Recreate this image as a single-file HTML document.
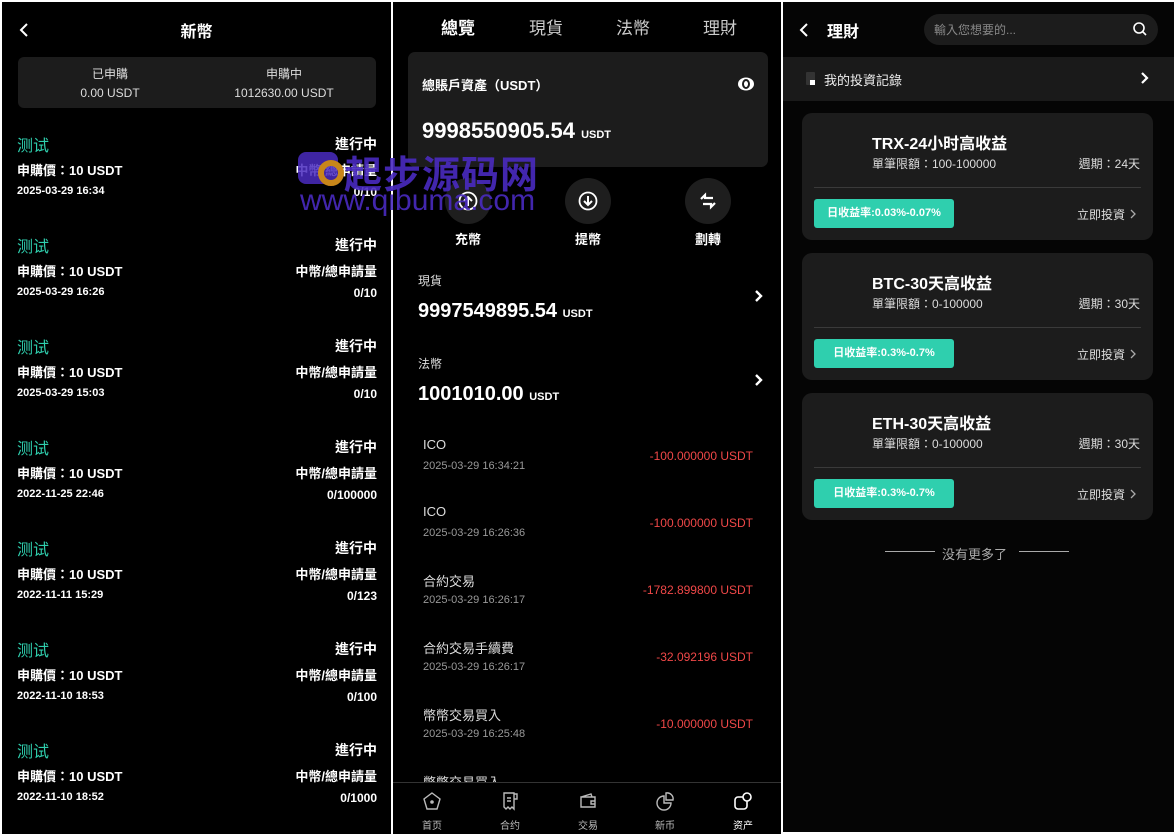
<!DOCTYPE html>
<html><head><meta charset="utf-8"><style>
*{margin:0;padding:0;box-sizing:border-box}
body{width:1176px;height:834px;background:#fff;position:relative;overflow:hidden;font-family:"Liberation Sans","Noto Sans CJK TC",sans-serif;color:#fff}
.p{position:absolute;background:#000;top:2px;overflow:hidden}
.a{position:absolute;white-space:nowrap}
.g{color:#2fcfae}
.b{font-weight:bold}
</style></head><body>
<!-- LEFT -->
<div class="p" style="left:2px;width:389px;height:832px">
  <svg class="a" style="left:16px;top:20px" width="14" height="16" viewBox="0 0 14 16"><path d="M9 2 L3 8 L9 14" stroke="#fff" stroke-width="2" fill="none"/></svg>
  <div class="a b" style="left:0;width:389px;text-align:center;top:16px;font-size:16px">新幣</div>
  <div class="a" style="left:16px;top:55px;width:358px;height:51px;background:#1c1c1c;border-radius:6px"></div>
  <div class="a" style="left:38px;width:140px;text-align:center;top:63px;font-size:12px;color:#ddd">已申購</div>
  <div class="a" style="left:38px;width:140px;text-align:center;top:84px;font-size:12px;color:#ddd">0.00 USDT</div>
  <div class="a" style="left:212px;width:140px;text-align:center;top:63px;font-size:12px;color:#ddd">申購中</div>
  <div class="a" style="left:212px;width:140px;text-align:center;top:84px;font-size:12px;color:#ddd">1012630.00 USDT</div>
  <div id="L"></div>
</div>
<div class="a" style="left:391px;top:0;width:2px;height:834px;background:#fff"></div>
<!-- MIDDLE -->
<div class="p" style="left:393px;width:388px;height:832px">
  <div class="a b" style="left:48px;top:12px;font-size:17px">總覽</div>
  <div class="a" style="left:136px;top:12px;font-size:17px;color:#ccc">現貨</div>
  <div class="a" style="left:223px;top:12px;font-size:17px;color:#ccc">法幣</div>
  <div class="a" style="left:310px;top:12px;font-size:17px;color:#ccc">理財</div>
  <div class="a" style="left:15px;top:50px;width:360px;height:115px;background:#1c1c1c;border-radius:7px"></div>
  <div class="a b" style="left:29px;top:73px;font-size:13px">總賬戶資產（USDT）</div>
  <svg class="a" style="left:344px;top:74px" width="18" height="16" viewBox="0 0 18 16"><ellipse cx="9" cy="8" rx="8" ry="6.5" fill="#fff"/><ellipse cx="9" cy="8" rx="3" ry="4" fill="none" stroke="#1c1c1c" stroke-width="2"/></svg>
  <div class="a b" style="left:29px;top:116px;font-size:22px">9998550905.54 <span style="font-size:11px">USDT</span></div>
  <div id="btns"></div>
  <div class="a" style="left:25px;top:270px;font-size:12px;color:#ddd">現貨</div>
  <div class="a b" style="left:25px;top:298px;font-size:20px">9997549895.54 <span style="font-size:11px">USDT</span></div>
  <div class="a" style="left:25px;top:353px;font-size:12px;color:#ddd">法幣</div>
  <div class="a b" style="left:25px;top:381px;font-size:20px">1001010.00 <span style="font-size:11px">USDT</span></div>
  <svg class="a" style="left:361px;top:287px" width="10" height="14" viewBox="0 0 10 14"><path d="M2 2 L7 7 L2 12" stroke="#fff" stroke-width="2.4" fill="none"/></svg>
  <svg class="a" style="left:361px;top:371px" width="10" height="14" viewBox="0 0 10 14"><path d="M2 2 L7 7 L2 12" stroke="#fff" stroke-width="2.4" fill="none"/></svg>
  <div id="M"></div>
  <div class="a" style="left:0;top:780px;width:388px;height:52px;background:#000;border-top:1px solid #333"></div>
  <div id="nav"></div>
</div>
<div class="a" style="left:781px;top:0;width:2px;height:834px;background:#fff"></div>
<!-- RIGHT -->
<div class="p" style="left:783px;width:391px;height:830px;background:#050505">
  <svg class="a" style="left:15px;top:20px" width="14" height="16" viewBox="0 0 14 16"><path d="M9 2 L3 8 L9 14" stroke="#fff" stroke-width="2" fill="none"/></svg>
  <div class="a b" style="left:44px;top:16px;font-size:16px">理財</div>
  <div class="a" style="left:141px;top:12px;width:234px;height:31px;background:#1c1c1c;border-radius:16px"></div>
  <div class="a" style="left:151px;top:19px;font-size:12px;color:#888">輸入您想要的...</div>
  <svg class="a" style="left:349px;top:19px" width="16" height="16" viewBox="0 0 16 16"><circle cx="7" cy="7" r="5" stroke="#fff" stroke-width="1.6" fill="none"/><path d="M11 11 L14 14" stroke="#fff" stroke-width="1.6"/></svg>
  <div class="a" style="left:0;top:55px;width:391px;height:44px;background:#1a1a1a"></div>
  <div class="a" style="left:23px;top:70px;width:9px;height:13px;background:#333;border-radius:1px"></div>
  <div class="a" style="left:27px;top:78px;width:5px;height:5px;background:#fff"></div>
  <div class="a" style="left:41px;top:68px;font-size:13px;color:#eee">我的投資記錄</div>
  <svg class="a" style="left:357px;top:69px" width="10" height="14" viewBox="0 0 10 14"><path d="M2 2 L7 7 L2 12" stroke="#fff" stroke-width="2.2" fill="none"/></svg>
  <div id="R"></div>
  <div class="a" style="left:102px;top:549px;width:50px;height:1px;background:#aaa"></div>
  <div class="a" style="left:159px;top:542px;font-size:13px;color:#aaa">没有更多了</div>
  <div class="a" style="left:236px;top:549px;width:50px;height:1px;background:#aaa"></div>
</div>
<!-- watermark -->
<div class="a" style="left:298px;top:152px;width:40px;height:32px;background:#4a2bc0;border-radius:8px;opacity:.85"></div>
<div class="a" style="left:318px;top:160px;width:26px;height:26px;border:6px solid #c8861a;border-radius:50%"></div>
<div class="a b" style="left:344px;top:144px;font-size:38px;color:#4a2bc0;letter-spacing:1px;opacity:.9">起步源码网</div>
<div class="a" style="left:300px;top:184px;font-size:30px;color:#4a2bc0;letter-spacing:0px;opacity:.9">www.qibuma.com</div>
<script>
var L='';for(var i=0;i<7;i++){var y=130+i*101;var d=['2025-03-29 16:34','2025-03-29 16:26','2025-03-29 15:03','2022-11-25 22:46','2022-11-11 15:29','2022-11-10 18:53','2022-11-10 18:52'][i];var q=['0/10','0/10','0/10','0/100000','0/123','0/100','0/1000'][i];
L+='<div class="a g" style="left:15px;top:'+y+'px;font-size:16px">测试</div><div class="a b" style="right:14px;top:'+(y+2)+'px;font-size:14px">進行中</div>'+
'<div class="a b" style="left:15px;top:'+(y+28)+'px;font-size:13px">申購價：10 USDT</div><div class="a b" style="right:14px;top:'+(y+28)+'px;font-size:13px">中幣/總申請量</div>'+
'<div class="a b" style="left:15px;top:'+(y+53)+'px;font-size:11px">'+d+'</div><div class="a b" style="right:14px;top:'+(y+53)+'px;font-size:12px">'+q+'</div>';}
document.getElementById('L').outerHTML=L;
var B='',ic=['<path d="M10 15 V6 M6 10 L10 6 L14 10" stroke="#fff" stroke-width="2" fill="none"/>','<path d="M10 5 V14 M6 10 L10 14 L14 10" stroke="#fff" stroke-width="2" fill="none"/>'],lb=['充幣','提幣','劃轉'];
for(var i=0;i<3;i++){var x=52+i*120;B+='<div class="a" style="left:'+x+'px;top:176px;width:46px;height:46px;border-radius:50%;background:#1e1e1e"></div>';
B+='<svg class="a" style="left:'+(x+13)+'px;top:189px" width="20" height="20" viewBox="0 0 20 20">'+(i<2?'<circle cx="10" cy="10" r="8.5" stroke="#fff" stroke-width="1.8" fill="none"/>'+ic[i]:'<path d="M3 8 L7 4 L7 7 H15 M17 12 L13 16 L13 13 H5" stroke="#fff" stroke-width="2.2" fill="none"/>')+'</svg>';
B+='<div class="a b" style="left:'+(x-7)+'px;width:60px;text-align:center;top:227px;font-size:13px">'+lb[i]+'</div>';}
document.getElementById('btns').outerHTML=B;
var M='',t=['ICO','ICO','合約交易','合約交易手續費','幣幣交易買入','幣幣交易買入'],dd=['2025-03-29 16:34:21','2025-03-29 16:26:36','2025-03-29 16:26:17','2025-03-29 16:26:17','2025-03-29 16:25:48',''],am=['-100.000000 USDT','-100.000000 USDT','-1782.899800 USDT','-32.092196 USDT','-10.000000 USDT',''];
for(var i=0;i<6;i++){var y=435+i*67;M+='<div class="a" style="left:30px;top:'+y+'px;font-size:13px;color:#ddd">'+t[i]+'</div><div class="a" style="left:30px;top:'+(y+23)+'px;font-size:11px;color:#999">'+dd[i]+'</div><div class="a" style="right:28px;top:'+(y+12)+'px;font-size:12px;color:#f04848">'+am[i]+'</div>';}
document.getElementById('M').outerHTML=M;
var N='',nl=['首页','合约','交易','新币','资产'],nx=[39,117,195,272,350],sv=['<path d="M10 2 L18 8 L15 18 H5 L2 8 Z" stroke="#bbb" stroke-width="1.4" fill="none"/><circle cx="10" cy="11" r="1.8" fill="#bbb"/>','<path d="M4 2 H14 V18 L12 16 L10 18 L8 16 L6 18 L4 16 Z M14 3 H17 V8 H14 M7 7 H11 M7 10 H11" stroke="#bbb" stroke-width="1.4" fill="none"/>','<path d="M3 6 L13 3 L14 6 M3 6 H17 V16 H3 Z M17 10 H13 V13 H17" stroke="#bbb" stroke-width="1.4" fill="none"/>','<path d="M9 5 A7 7 0 1 0 16 12 H9 Z M11 2 A6 6 0 0 1 18 9 H11 Z" stroke="#bbb" stroke-width="1.4" fill="none"/>','<rect x="2" y="6" width="12" height="12" rx="3" stroke="#fff" stroke-width="1.6" fill="none"/><circle cx="14" cy="6" r="4" stroke="#fff" stroke-width="1.6" fill="#000"/>'];
for(var i=0;i<5;i++){N+='<svg class="a" style="left:'+(nx[i]-10)+'px;top:789px" width="20" height="20" viewBox="0 0 20 20">'+sv[i]+'</svg><div class="a" style="left:'+(nx[i]-20)+'px;width:40px;text-align:center;top:815px;font-size:10px;color:'+(i==4?'#fff':'#bbb')+'">'+nl[i]+'</div>';}
document.getElementById('nav').outerHTML=N;
var R='',nm=['TRX-24小时高收益','BTC-30天高收益','ETH-30天高收益'],lim=['100-100000','0-100000','0-100000'],per=['24天','30天','30天'],rt=['日收益率:0.03%-0.07%','日收益率:0.3%-0.7%','日收益率:0.3%-0.7%'];
for(var i=0;i<3;i++){var y=111+i*140;R+='<div class="a" style="left:19px;top:'+y+'px;width:351px;height:127px;background:#1c1c1c;border-radius:10px"></div>'+
'<div class="a b" style="left:89px;top:'+(y+17)+'px;font-size:16px">'+nm[i]+'</div>'+
'<div class="a" style="left:89px;top:'+(y+42)+'px;font-size:12px;color:#ddd">單筆限額：'+lim[i]+'</div><div class="a" style="right:34px;top:'+(y+42)+'px;font-size:12px;color:#ddd">週期：'+per[i]+'</div>'+
'<div class="a" style="left:31px;top:'+(y+74)+'px;width:327px;height:1px;background:#3a3a3a"></div>'+
'<div class="a b" style="left:31px;top:'+(y+86)+'px;width:140px;height:29px;background:#2fcfae;border-radius:3px;font-size:11px;line-height:29px;text-align:center">'+rt[i]+'</div>'+
'<div class="a" style="right:49px;top:'+(y+93)+'px;font-size:12px;color:#ddd">立即投資</div>'+
'<svg class="a" style="left:346px;top:'+(y+95)+'px" width="8" height="12" viewBox="0 0 8 12"><path d="M2 2 L6 6 L2 10" stroke="#aaa" stroke-width="1.3" fill="none"/></svg>';}
document.getElementById('R').outerHTML=R;
</script>
</body></html>
